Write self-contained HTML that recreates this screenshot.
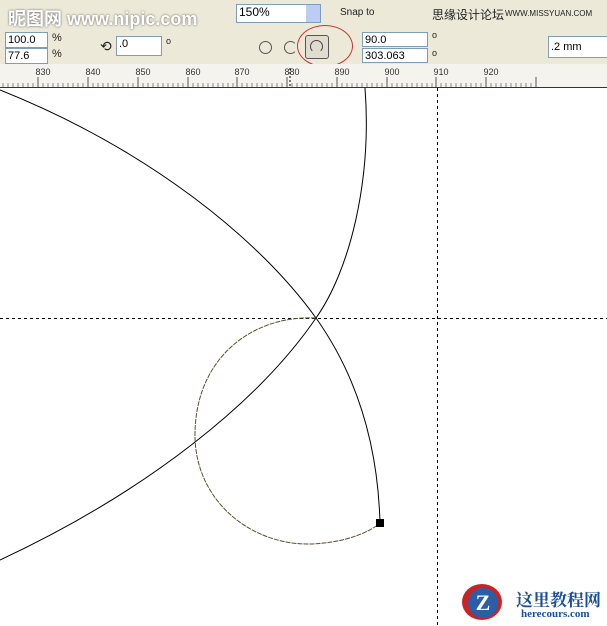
<!DOCTYPE html>
<html><head><meta charset="utf-8"><style>
body{margin:0;width:607px;height:626px;overflow:hidden;background:#fff;font-family:"Liberation Sans","Noto Sans CJK SC",sans-serif;position:relative}
.tb{position:absolute;left:0;width:607px;background:#ece9d8}
.box{position:absolute;background:#fff;border:1px solid #7f9db9;font-size:11px;line-height:14px;padding-left:2px;box-sizing:border-box}
.t{position:absolute;font-size:11px;color:#222}
</style></head><body>
<div class="tb" style="top:0;height:30px;border-bottom:1px solid #c8c4b0"></div>
<div class="tb" style="top:30px;height:34px;border-bottom:1px solid #aca899"></div>
<div class="t" style="left:8px;top:5px;font-size:18px;font-weight:bold;color:#fff;text-shadow:0 0 2px #555">昵图网 www.nipic.com</div>
<div class="box" style="left:236px;top:4px;width:85px;height:19px;font-size:12px">150%</div>
<div style="position:absolute;left:306px;top:5px;width:14px;height:17px;background:#b9cdf5"></div>
<div class="t" style="left:340px;top:7px;font-size:10px">Snap to</div>
<div class="t" style="left:432px;top:6px;font-size:12px">思缘设计论坛</div>
<div class="t" style="left:505px;top:9px;font-size:8px">WWW.MISSYUAN.COM</div>
<div class="box" style="left:5px;top:32px;width:43px;height:16px">100.0</div>
<div class="box" style="left:5px;top:48px;width:43px;height:16px">77.6</div>
<div class="t" style="left:52px;top:32px">%</div><div class="t" style="left:52px;top:48px">%</div>
<div class="t" style="left:100px;top:38px;font-size:14px">⟲</div>
<div class="box" style="left:116px;top:36px;width:46px;height:20px">.0</div>
<div class="t" style="left:166px;top:36px;font-size:9px">o</div>
<div style="position:absolute;left:259px;top:41px;width:11px;height:11px;border:1px solid #555;border-radius:50%"></div>
<div style="position:absolute;left:284px;top:41px;width:11px;height:11px;border:1px solid #555;border-radius:50%;border-right-color:transparent"></div>
<div style="position:absolute;left:305px;top:35px;width:22px;height:22px;border:1px solid #555;border-radius:3px;background:#e0ddd0"></div>
<div style="position:absolute;left:310px;top:40px;width:11px;height:11px;border:1px solid #444;border-radius:50%;border-bottom-color:transparent"></div>
<div style="position:absolute;left:297px;top:25px;width:54px;height:40px;border:1px solid #c33;border-radius:50%"></div>
<div class="box" style="left:362px;top:32px;width:66px;height:15px">90.0</div>
<div class="box" style="left:362px;top:48px;width:66px;height:15px">303.063</div>
<div class="t" style="left:432px;top:30px;font-size:9px">o</div><div class="t" style="left:432px;top:48px;font-size:9px">o</div>
<div class="box" style="left:548px;top:36px;width:60px;height:22px;line-height:20px">.2 mm</div>
<svg style="position:absolute;left:0;top:64px" width="607" height="24">
<rect width="607" height="24" fill="#f4f3ee"/>
<g font-size="9" fill="#333" font-family="Liberation Sans" text-anchor="middle">
<text x="43" y="11">830</text><text x="93" y="11">840</text><text x="143" y="11">850</text><text x="193" y="11">860</text><text x="242" y="11">870</text><text x="292" y="11">880</text><text x="342" y="11">890</text><text x="392" y="11">900</text><text x="441" y="11">910</text><text x="491" y="11">920</text>
</g>
<path d="M0,23.5H607" stroke="#333"/>
<g stroke="#555"><path d="M38,13V23M88,13V23M138,13V23M188,13V23M237,13V23M287,13V23M337,13V23M387,13V23M436,13V23M486,13V23M536,13V23" /></g>
<path d="M3,19V23M8,19V23M13,19V23M18,19V23M23,19V23M28,19V23M33,19V23M43,19V23M48,19V23M53,19V23M58,19V23M63,19V23M68,19V23M73,19V23M78,19V23M83,19V23M93,19V23M98,19V23M103,19V23M108,19V23M113,19V23M118,19V23M123,19V23M128,19V23M133,19V23M143,19V23M148,19V23M153,19V23M158,19V23M163,19V23M168,19V23M173,19V23M178,19V23M183,19V23M193,19V23M198,19V23M203,19V23M208,19V23M213,19V23M218,19V23M223,19V23M228,19V23M233,19V23M242,19V23M247,19V23M252,19V23M257,19V23M262,19V23M267,19V23M272,19V23M277,19V23M282,19V23M292,19V23M297,19V23M302,19V23M307,19V23M312,19V23M317,19V23M322,19V23M327,19V23M332,19V23M342,19V23M347,19V23M352,19V23M357,19V23M362,19V23M367,19V23M372,19V23M377,19V23M382,19V23M392,19V23M397,19V23M402,19V23M407,19V23M412,19V23M417,19V23M422,19V23M427,19V23M432,19V23M441,19V23M446,19V23M451,19V23M456,19V23M461,19V23M466,19V23M471,19V23M476,19V23M481,19V23M491,19V23M496,19V23M501,19V23M506,19V23M511,19V23M516,19V23M521,19V23M526,19V23M531,19V23" stroke="#888"/>
<path d="M290,4V23" stroke="#000" stroke-dasharray="2,2"/>
</svg>
<svg style="position:absolute;left:0;top:0" width="607" height="626">
<g stroke="#000" fill="none" stroke-width="1">
<path d="M0,318.5H607" stroke-dasharray="3,3"/>
<path d="M437.5,88V626" stroke-dasharray="3,3"/>
<path d="M0,90 C150,150 260,240 316,318 C360,380 378,450 380,523"/>
<path d="M365,88 C372,180 350,270 316,318 C260,400 150,490 0,560"/>
<path d="M316,318 C250,315 195,360 195,435 C195,500 250,545 310,544 C345,543 370,532 380,523" stroke="#5a5030" stroke-dasharray="5,1"/>
</g>
<rect x="376" y="519" width="8" height="8" fill="#000"/>
</svg>
<div style="position:absolute;left:462px;top:584px;width:40px;height:36px;border-radius:50%;background:#c22"></div>
<div style="position:absolute;left:468px;top:588px;width:30px;height:30px;border-radius:50%;background:#2a5fa8;color:#fff;font:bold 22px 'Liberation Serif',serif;text-align:center;line-height:30px">Z</div>
<div class="t" style="left:516px;top:586px;font-size:17px;font-weight:bold;color:#1a4e9c;font-family:'Liberation Serif','Noto Serif CJK SC',serif">这里教程网</div>
<div class="t" style="left:521px;top:608px;font-size:11px;font-weight:bold;color:#1a4e9c;font-family:'Liberation Serif',serif">herecours.com</div>
</body></html>
